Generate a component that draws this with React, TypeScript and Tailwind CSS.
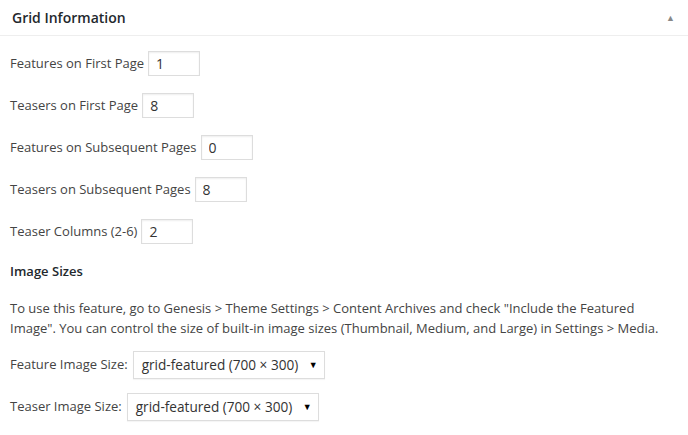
import React from 'react';

const NumberRow: React.FC<{ label: string; value: string }> = ({ label, value }) => (
  <div className="flex h-[25px] items-center">
    <span>{label}</span>
    <input
      type="text"
      defaultValue={value}
      className="ml-[4px] h-[25px] w-[52px] border border-[#dddddd] bg-white px-[7px] text-[14px] text-[#333] shadow-[inset_0_1px_2px_rgba(0,0,0,0.07)] outline-none"
    />
  </div>
);

const SelectRow: React.FC<{ label: string }> = ({ label }) => (
  <div className="flex h-[28px] items-center">
    <span>{label}</span>
    <div className="ml-[5px] flex h-[28px] w-[192px] items-center justify-between whitespace-nowrap border border-[#dddddd] bg-white pl-[8px] pr-[6px] text-[13.6px] text-[#333] shadow-[0_1px_1px_rgba(0,0,0,0.04)]">
      <span>grid-featured (700 × 300)</span>
      <span className="text-[9px] text-black">▼</span>
    </div>
  </div>
);

const App: React.FC = () => {
  return (
    <div className="h-[435px] w-[688px] bg-white text-[13px] text-[#444] font-['Open_Sans',sans-serif]">
      <div className="flex h-[36px] items-center justify-between border-b border-[#eeeeee] pl-[12px] pr-[13px]">
        <h2 className="text-[14px] font-semibold text-[#23282d]">Grid Information</h2>
        <span className="text-[9px] text-[#888]">▲</span>
      </div>

      <div className="pl-[10px] pr-[12px] pt-[15px]">
        <div className="flex flex-col gap-[17px]">
          <NumberRow label="Features on First Page" value="1" />
          <NumberRow label="Teasers on First Page" value="8" />
          <NumberRow label="Features on Subsequent Pages" value="0" />
          <NumberRow label="Teasers on Subsequent Pages" value="8" />
          <NumberRow label="Teaser Columns (2-6)" value="2" />
        </div>

        <h4 className="mt-[17px] text-[13px] font-semibold leading-[20px] text-[#23282d]">Image Sizes</h4>

        <p className="mt-[17px] leading-[20px]">
          To use this feature, go to Genesis &gt; Theme Settings &gt; Content Archives and check "Include the Featured
          Image". You can control the size of built-in image sizes (Thumbnail, Medium, and Large) in Settings &gt; Media.
        </p>

        <div className="mt-[13px] flex flex-col gap-[14px]">
          <SelectRow label="Feature Image Size:" />
          <SelectRow label="Teaser Image Size:" />
        </div>
      </div>
    </div>
  );
};

export default App;
